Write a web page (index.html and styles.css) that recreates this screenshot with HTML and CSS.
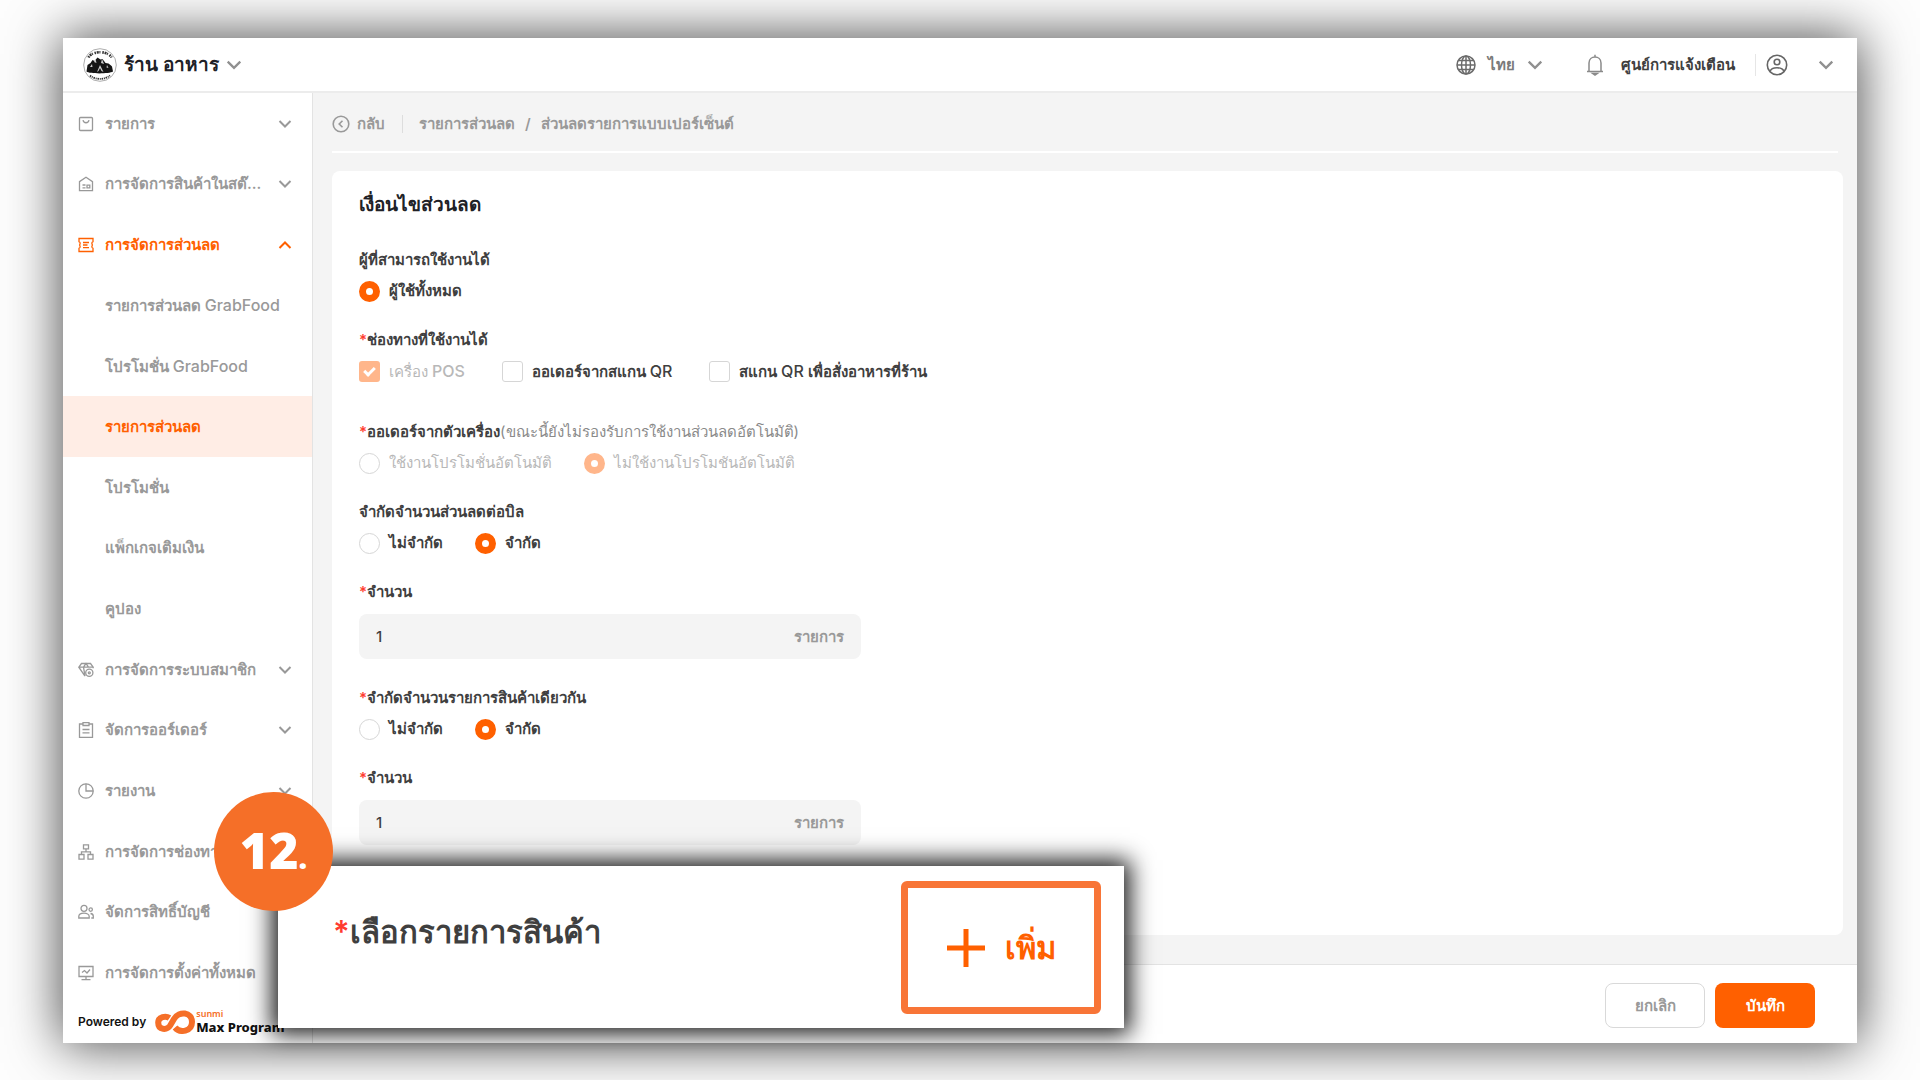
FILE: index.html
```html
<!DOCTYPE html>
<html lang="th">
<head>
<meta charset="utf-8">
<meta name="viewport" content="width=device-width, initial-scale=1">
<title>เงื่อนไขส่วนลด</title>
<link rel="stylesheet" href="styles.css">
</head>
<body>
<svg class="sprite" aria-hidden="true">
  <symbol id="chevron" viewBox="0 0 14 14"><path d="M1.5 4 7 9.5 12.5 4"/></symbol>
  <symbol id="box" viewBox="0 0 16 16"><rect x="1.5" y="1.5" width="13" height="13" rx="1"/><path d="M5 4.2c.6 3.4 5.400 3.400 6 0"/></symbol>
  <symbol id="store" viewBox="0 0 16 16"><path d="M1.500 5.600 8 1.300l6.500 4.300v9h-13z"/><path d="M4.500 9h3M4.500 11.800h3M9 9.200h2.800v2.600H9z"/></symbol>
  <symbol id="ticket" viewBox="0 0 16 16"><path d="M1 1.500h14v3.200c-1.400.5-1.400 1.800-.6 3.300-.8 1.500-.8 2.800.6 3.300v3.200H1v-3.200c1.400-.5 1.400-1.800.6-3.300.8-1.500.8-2.800-.6-3.300z"/><path d="M5 5.500h6M5 8h4.500M5 10.700h6"/></symbol>
  <symbol id="gem" viewBox="0 0 16 16"><path d="M7 14.200.8 5.200l2.700-3.700h9l2.700 3.700v1M.8 5.200h14.400M5.500 5.200l1.500 9M5.500 5.200 8 1.500l2.500 3.700"/><circle cx="11.300" cy="10.800" r="3.600"/><circle cx="11.300" cy="10.800" r="1"/></symbol>
  <symbol id="clipboard" viewBox="0 0 16 16"><path d="M5 2H1.500v13.300h13V2H11M5 .7h6v2.800H5zM4.500 7.500h7M4.500 10.800h7"/></symbol>
  <symbol id="pie" viewBox="0 0 16 16"><circle cx="8" cy="8" r="7.200"/><path d="M8 .8V8h7.200"/></symbol>
  <symbol id="tree" viewBox="0 0 16 16"><path d="M5.500.8h5v4h-5zM8 4.800v3M3.500 10.500V7.800h9v2.700M1 10.500h5v4.700H1zM10 10.500h5v4.700h-5z"/></symbol>
  <symbol id="people" viewBox="0 0 16 16"><circle cx="6" cy="4.300" r="3"/><path d="M.8 14v-1.500c0-4.500 10.400-4.500 10.400 0V14z"/><circle cx="12.700" cy="5.600" r="1.700"/><path d="M12.500 9.500c1.800.2 2.800 1.200 2.800 2.700V14h-2"/></symbol>
  <symbol id="monitor" viewBox="0 0 16 16"><path d="M1 1.500h14v10H1zM8 11.500v3M3.500 14.700h9M4 7.500l2.500-2 2.500 2.500 3-3.500"/></symbol>
  <symbol id="back" viewBox="0 0 18 18"><circle cx="9" cy="9" r="7.800"/><path d="M10.500 5.800 7.200 9l3.300 3.200"/></symbol>
  <symbol id="globe" viewBox="0 0 20 20"><circle cx="10" cy="10" r="9"/><ellipse cx="10" cy="10" rx="4.500" ry="9"/><path d="M10 1v18M1 10h18M2.500 5.500h15M2.500 14.500h15"/></symbol>
  <symbol id="bell" viewBox="0 0 18 22"><path d="M1 17.500h16M3 17.500V9c0-8 12-8 12 0v8.500M9 3V.8M6.800 19.500h4.400L9 21z"/></symbol>
  <symbol id="user" viewBox="0 0 22 22"><circle cx="11" cy="11" r="9.700"/><circle cx="11" cy="8" r="2.800"/><path d="M4 17.500c1.600-5 12.400-5 14 0"/></symbol>
</svg>

<div class="app">
  <header class="topbar">
    <button class="shop" type="button">
      <svg class="shop-logo" viewBox="0 0 34 34" aria-hidden="true">
        <circle cx="17" cy="17" r="16.300" fill="#fff" stroke="#999" stroke-width=".8"/>
        <path d="M3.500 23.500 4.500 17l3-2 2-3 2 1 3-3.500 3 2 2-.5 3 4 3 .5 2.500 2 1 1 1 5c-4 2.500-23.500 2.500-26.500 0z" fill="#151515"/>
        <path d="m11 14 1.500-3 1 4zM18 15l1-4 2 5zM7 19l2-3 .5 3zM14 24l3-7 3.500 7-2-1-1.500-3-1.500 3zM24 17l1.500 3-2-.5z" fill="#ccc"/>
        <path d="M5.500 9.500C9 2.500 25 2.500 28.500 9.500" fill="none" stroke="#333" stroke-width="2.600" stroke-dasharray="1.500 .8 2 .6 1 1.800"/>
        <path d="M7 27.500c5 4.500 15 4.500 20 0" fill="none" stroke="#333" stroke-width="1.800" stroke-dasharray="1.500 .8 1 .8"/>
      </svg>
      <span>ร้าน อาหาร</span>
      <svg class="icon chev"><use href="#chevron"/></svg>
    </button>
    <div class="tools">
      <button class="language" type="button"><svg class="icon globe"><use href="#globe"/></svg><span>ไทย</span><svg class="icon chev"><use href="#chevron"/></svg></button>
      <button class="notices" type="button"><svg class="icon bell"><use href="#bell"/></svg><span>ศูนย์การแจ้งเตือน</span></button>
      <button class="account" type="button" aria-label="บัญชี"><svg class="icon user"><use href="#user"/></svg><svg class="icon chev"><use href="#chevron"/></svg></button>
    </div>
  </header>

  <div class="body">
    <aside class="sidebar">
      <nav class="nav">
        <a href="#"><svg class="icon"><use href="#box"/></svg><span>รายการ</span><svg class="icon arrow"><use href="#chevron"/></svg></a>
        <a href="#"><svg class="icon"><use href="#store"/></svg><span>การจัดการสินค้าในสต๊...</span><svg class="icon arrow"><use href="#chevron"/></svg></a>
        <a href="#" class="open"><svg class="icon"><use href="#ticket"/></svg><span>การจัดการส่วนลด</span><svg class="icon arrow"><use href="#chevron"/></svg></a>
        <a href="#" class="sub"><span>รายการส่วนลด <i lang="en">GrabFood</i></span></a>
        <a href="#" class="sub"><span>โปรโมชั่น <i lang="en">GrabFood</i></span></a>
        <a href="#" class="sub current"><span>รายการส่วนลด</span></a>
        <a href="#" class="sub"><span>โปรโมชั่น</span></a>
        <a href="#" class="sub"><span>แพ็กเกจเติมเงิน</span></a>
        <a href="#" class="sub"><span>คูปอง</span></a>
        <a href="#"><svg class="icon"><use href="#gem"/></svg><span>การจัดการระบบสมาชิก</span><svg class="icon arrow"><use href="#chevron"/></svg></a>
        <a href="#"><svg class="icon"><use href="#clipboard"/></svg><span>จัดการออร์เดอร์</span><svg class="icon arrow"><use href="#chevron"/></svg></a>
        <a href="#"><svg class="icon"><use href="#pie"/></svg><span>รายงาน</span><svg class="icon arrow"><use href="#chevron"/></svg></a>
        <a href="#"><svg class="icon"><use href="#tree"/></svg><span>การจัดการช่องทาง</span></a>
        <a href="#"><svg class="icon"><use href="#people"/></svg><span>จัดการสิทธิ์บัญชี</span></a>
        <a href="#"><svg class="icon"><use href="#monitor"/></svg><span>การจัดการตั้งค่าทั้งหมด</span></a>
      </nav>
      <div class="powered">
        <span>Powered by</span>
        <svg class="brand-mark" viewBox="0 0 40 24" aria-hidden="true"><path d="M14.500 8C11 5.500 3.200 6.500 3.200 12.800c0 7.500 8.800 7.700 12 2.700L19 9C24 .5 37 2 37 12c0 9.500-12 11.500-17 5.500" fill="none" stroke="#f56f28" stroke-width="6"/></svg>
        <span class="brand"><span class="brand-top">sunmi</span><span class="brand-name">Max Program</span></span>
      </div>
    </aside>

    <main class="content">
      <div class="scroll">
        <div class="crumbs">
          <a href="#" class="back"><svg class="icon"><use href="#back"/></svg>กลับ</a>
          <a href="#">รายการส่วนลด</a><span class="slash">/</span><span>ส่วนลดรายการแบบเปอร์เซ็นต์</span>
        </div>
        <form class="card" id="discount">
          <h1>เงื่อนไขส่วนลด</h1>
          <fieldset>
            <legend>ผู้ที่สามารถใช้งานได้</legend>
            <div class="options"><label><input type="radio" name="who" checked>ผู้ใช้ทั้งหมด</label></div>
          </fieldset>
          <fieldset class="channels">
            <legend><b>*</b>ช่องทางที่ใช้งานได้</legend>
            <div class="options">
              <label class="off"><input type="checkbox" checked disabled><span>เครื่อง <i lang="en">POS</i></span></label>
              <label><input type="checkbox"><span>ออเดอร์จากสแกน <i lang="en">QR</i></span></label>
              <label><input type="checkbox"><span>สแกน <i lang="en">QR</i> เพื่อสั่งอาหารที่ร้าน</span></label>
            </div>
          </fieldset>
          <fieldset>
            <legend><b>*</b>ออเดอร์จากตัวเครื่อง<small>(ขณะนี้ยังไม่รองรับการใช้งานส่วนลดอัตโนมัติ)</small></legend>
            <div class="options">
              <label class="off"><input type="radio" name="auto" disabled>ใช้งานโปรโมชั่นอัตโนมัติ</label>
              <label class="off"><input type="radio" name="auto" checked disabled>ไม่ใช้งานโปรโมชันอัตโนมัติ</label>
            </div>
          </fieldset>
          <fieldset>
            <legend>จำกัดจำนวนส่วนลดต่อบิล</legend>
            <div class="options">
              <label><input type="radio" name="bill">ไม่จำกัด</label>
              <label><input type="radio" name="bill" checked>จำกัด</label>
            </div>
          </fieldset>
          <div class="field">
            <label for="bill-count"><b>*</b>จำนวน</label>
            <div class="entry"><input id="bill-count" type="text" value="1"><span>รายการ</span></div>
          </div>
          <fieldset>
            <legend><b>*</b>จำกัดจำนวนรายการสินค้าเดียวกัน</legend>
            <div class="options">
              <label><input type="radio" name="item">ไม่จำกัด</label>
              <label><input type="radio" name="item" checked>จำกัด</label>
            </div>
          </fieldset>
          <div class="field">
            <label for="item-count"><b>*</b>จำนวน</label>
            <div class="entry"><input id="item-count" type="text" value="1"><span>รายการ</span></div>
          </div>
        </form>
      </div>
      <footer class="actions">
        <button type="button" class="cancel">ยกเลิก</button>
        <button type="submit" form="discount" class="save">บันทึก</button>
      </footer>
    </main>
  </div>

  <section class="callout">
    <p><b>*</b>เลือกรายการสินค้า</p>
    <button type="button" class="add"><svg viewBox="0 0 38 38" aria-hidden="true"><path d="M19 0v38M0 19h38"/></svg>เพิ่ม</button>
    <div class="step">12<small>.</small></div>
  </section>
</div>
</body>
</html>
```
FILE: styles.css
```css
*, *::before, *::after { box-sizing: border-box; }
body {
  margin: 0;
  min-height: 100vh;
  padding: 38px 63px 37px;
  display: flex;
  background: #fdfdfd;
  color: #3f3f3f;
  font: 600 15px/24px Inter, "Noto Sans", sans-serif;
}
button, input { font: inherit; color: inherit; }
button { border: 0; padding: 0; background: none; cursor: pointer; }
a { color: inherit; text-decoration: none; }
b { color: #ff3b30; font-weight: inherit; }
i { font-style: normal; font-weight: 500; font-size: 16px; }
.sprite { position: absolute; width: 0; height: 0; }
.icon { width: 16px; height: 16px; flex: none; fill: none; stroke: currentColor; stroke-width: 1.3; }
.chev { width: 16px; height: 16px; color: #909090; stroke-width: 2; }

.app {
  position: relative;
  flex: 1;
  min-width: 0;
  display: flex;
  flex-direction: column;
  background: #fff;
  box-shadow: 0 0 50px 2px rgba(0, 0, 0, .7);
}

.topbar {
  height: 55px;
  padding: 0 23px 0 20px;
  display: flex;
  align-items: center;
  justify-content: space-between;
  border-bottom: 2px solid #ececec;
}
.topbar button { display: flex; align-items: center; }
.shop { gap: 7px; font-size: 19px; color: #202126; }
.shop-logo { width: 34px; height: 34px; }
.tools { display: flex; align-items: center; }
.language { gap: 12px; color: #7a7a7a; }
.globe { width: 20px; height: 20px; color: #6b6b6b; stroke-width: 1.5; }
.notices { gap: 17px; margin-left: 43px; }
.bell { width: 18px; height: 22px; color: #8a8a8a; stroke-width: 1.5; }
.account { gap: 30px; margin-left: 20px; padding-left: 10px; border-left: 1px solid #e6e6e6; }
.user { width: 22px; height: 22px; color: #666; stroke-width: 1.6; }

.body { flex: 1; display: flex; }
.sidebar {
  width: 250px;
  flex: none;
  display: flex;
  flex-direction: column;
  border-right: 1px solid #e3e3e3;
  color: #999;
}
.nav { flex: 1; display: grid; grid-auto-rows: 1fr; }
.nav a { display: flex; align-items: center; gap: 11px; padding: 1px 20px 0 15px; white-space: nowrap; }
.nav span { flex: 1; }
.nav .sub { padding-left: 42px; }
.nav .arrow { width: 14px; height: 14px; stroke-width: 2; }
.nav .open, .nav .current { color: #ff6000; }
.nav .current { background: #ffede5; }
.open .arrow { transform: rotate(180deg); }
.powered {
  height: 40px;
  padding: 0 0 3px 15px;
  display: flex;
  align-items: center;
  font-size: 12px;
  color: #111;
  white-space: nowrap;
}
.brand-mark { width: 40px; height: 24px; margin: 0 1px 0 9px; }
.brand { display: flex; flex-direction: column; font-family: "Noto Sans", sans-serif; }
.brand-top { color: #f56f28; font-size: 9px; line-height: 10px; }
.brand-name { font-size: 13px; line-height: 16px; font-weight: 800; }

.content { flex: 1; min-width: 0; display: flex; flex-direction: column; background: #f4f4f4; }
.scroll { flex: 1; display: flex; flex-direction: column; padding: 0 14px 29px 19px; }
.crumbs {
  height: 60px;
  margin: 0 5px 18px 0;
  padding-top: 3px;
  display: flex;
  align-items: center;
  border-bottom: 2px solid #fff;
  color: #999;
}
.back { display: flex; align-items: center; gap: 7px; padding-right: 17px; margin-right: 16px; border-right: 1px solid #ddd; line-height: 16px; }
.back .icon { width: 18px; height: 18px; stroke-width: 1.6; }
.slash { padding: 0 10px; }

.card { flex: 1; padding: 19px 27px; display: flex; flex-direction: column; gap: 18px; border-radius: 8px; background: #fff; }
.card h1 { margin: 0 0 7px; font-size: 19px; line-height: 30px; font-weight: 600; color: #202126; }
fieldset { margin: 0; padding: 0; border: 0; min-width: 0; }
legend, .field > label { display: block; padding: 0; line-height: 30px; }
legend small { font-size: 15px; font-weight: 400; color: #8a8a8a; }
.channels { padding-bottom: 11px; }
.options { display: flex; gap: 32px; }
.channels .options { gap: 37px; }
.options label { display: flex; align-items: center; gap: 9px; line-height: 32px; }
.options .off { color: #b8b8b8; font-weight: 500; }
.options input { appearance: none; width: 21px; height: 21px; margin: 0; border: 1px solid #d6d6d6; background: #fff; }
.options input[type="radio"] { border-radius: 50%; }
.options input[type="radio"]:checked { border: 7px solid #ff6000; }
.options input[type="checkbox"] { display: grid; place-items: center; border-radius: 3px; }
.options input[type="checkbox"]:checked { border: 0; background: #ff6000; }
.options input[type="checkbox"]:checked::after {
  content: "";
  width: 11px;
  height: 7px;
  margin-bottom: 3px;
  border: solid #fff;
  border-width: 0 0 3px 3px;
  transform: rotate(-45deg);
}
.options input:checked:disabled { opacity: .45; }
.field { padding-bottom: 6px; }
.entry { width: 502px; height: 45px; margin-top: 7px; padding: 0 17px; display: flex; align-items: center; border-radius: 8px; background: #f4f4f4; }
.entry input { flex: 1; min-width: 0; padding: 0; border: 0; outline: 0; background: none; font-weight: 500; }
.entry span { color: #999; }

.actions { padding: 18px 42px 15px; display: flex; justify-content: flex-end; gap: 10px; border-top: 1px solid #e3e3e3; background: #fff; }
.actions button { width: 100px; height: 45px; border-radius: 8px; }
.actions .cancel { border: 1px solid #d9d9d9; color: #999; }
.actions .save { background: #ff6000; color: #fff; }

.callout {
  position: absolute;
  left: 215px;
  bottom: 15px;
  width: 846px;
  padding: 15px 23px 14px 55px;
  display: flex;
  justify-content: space-between;
  background: #fff;
  box-shadow: 0 0 22px 6px rgba(0, 0, 0, .9);
  font-size: 31px;
  line-height: 48px;
}
.callout p { margin: 27px 0 0; }
.add {
  width: 200px;
  height: 133px;
  display: flex;
  align-items: center;
  justify-content: center;
  gap: 20px;
  border: 7px solid #f87537;
  border-radius: 6px;
  color: #ff6000;
}
.add svg { width: 38px; height: 38px; fill: none; stroke: currentColor; stroke-width: 5; }
.step {
  position: absolute;
  left: -64px;
  top: -74px;
  width: 119px;
  height: 119px;
  border-radius: 50%;
  background: #f56f28;
  color: #fff;
  text-align: center;
  font: 900 50px/117px "Noto Sans", sans-serif;
}
.step small { font-size: 30px; }
```
